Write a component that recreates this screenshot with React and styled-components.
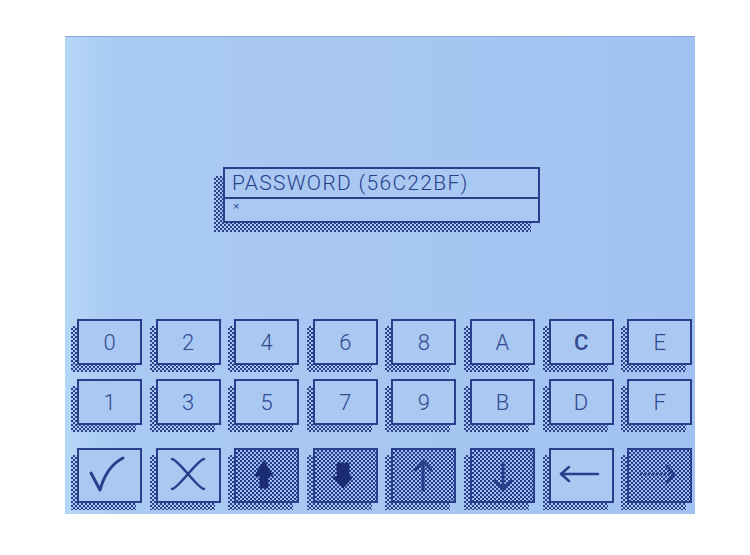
import React from 'react';
import styled, { createGlobalStyle, css } from 'styled-components';

const INK = '#2a3f8c';
const LABEL = '#34498f';
const LIGHT = '#a9c8f2';

const Global = createGlobalStyle`
  html, body { margin: 0; padding: 0; background: #ffffff; }
  body { font-family: "Liberation Sans", Arial, sans-serif; }
`;

const checker = (dark, light) => css`
  background-color: ${light};
  background-image: repeating-conic-gradient(${dark} 0 25%, transparent 0 50%);
  background-size: 4px 4px;
`;

const Page = styled.div`
  width: 750px;
  height: 555px;
  box-sizing: border-box;
  padding: 36px 0 0 65px;
`;

const Screen = styled.div`
  position: relative;
  z-index: 0;
  width: 630px;
  height: 478px;
  box-sizing: border-box;
  border-top: 1px solid #8ea8dc;
  background: linear-gradient(90deg, #b4d6f6 0%, #a9caf3 8%, #a6c6f2 60%, #a1c1f2 100%);
  padding: 130px 0 0 12px;
  display: flex;
  flex-direction: column;
`;

const PasswordBox = styled.div`
  position: relative;
  margin-left: 146px;
  width: 317px;
  height: 56px;
  box-sizing: border-box;
  border: 2px solid ${INK};
  background: ${LIGHT};
  display: flex;
  flex-direction: column;
  &::before {
    content: '';
    position: absolute;
    inset: -2px;
    transform: translate(-9px, 9px);
    z-index: -1;
    ${checker('#2b3f8c', '#a9c8f2')}
  }
`;

const BoxTitle = styled.div`
  height: 28px;
  border-bottom: 2px solid ${INK};
  padding-left: 7px;
  font-family: Roboto, "Liberation Sans", sans-serif;
  font-weight: 300;
  font-size: 21px;
  line-height: 29px;
  color: ${INK};
  letter-spacing: 1.3px;
`;

const BoxInput = styled.div`
  flex: 1;
  padding: 2px 8px;
  font-size: 11px;
  line-height: 10px;
  color: ${INK};
`;

const Keypad = styled.div`
  margin-top: 96px;
  display: flex;
  flex-direction: column;
`;

const KeyRow = styled.div`
  display: flex;
  gap: 13.6px;
  height: ${(p) => p.$h}px;
  margin-top: ${(p) => p.$mt || 0}px;
`;

const Key = styled.div`
  position: relative;
  width: 65px;
  height: 100%;
  box-sizing: border-box;
  border: 2px solid ${INK};
  display: flex;
  align-items: center;
  justify-content: center;
  font-family: Roboto, "Liberation Sans", sans-serif;
  font-size: 22px;
  color: ${LABEL};
  font-weight: ${(p) => (p.$strong ? 500 : 300)};
  ${(p) => (p.$dither ? checker('#24398a', '#9fbdee') : css`background: ${LIGHT};`)}
  &::before {
    content: '';
    position: absolute;
    inset: -2px;
    transform: translate(-6px, 7px);
    z-index: -1;
    ${checker('#2b3f8c', '#a9c8f2')}
  }
  svg {
    width: 100%;
    height: 100%;
    display: block;
  }
`;

const Icon = ({ children }) => (
  <svg viewBox="0 0 61 51" fill="none" stroke={INK} strokeLinecap="round" strokeLinejoin="round">
    {children}
  </svg>
);

const row1 = ['0', '2', '4', '6', '8', 'A', 'C', 'E'];
const row2 = ['1', '3', '5', '7', '9', 'B', 'D', 'F'];

export default function App() {
  return (
    <>
      <Global />
      <Page>
        <Screen>
          <PasswordBox>
            <BoxTitle>PASSWORD (56C22BF)</BoxTitle>
            <BoxInput>×</BoxInput>
          </PasswordBox>
          <Keypad>
            <KeyRow $h={46}>
              {row1.map((k) => (
                <Key key={k} $strong={k === 'C'}>{k}</Key>
              ))}
            </KeyRow>
            <KeyRow $h={46} $mt={14}>
              {row2.map((k) => (
                <Key key={k}>{k}</Key>
              ))}
            </KeyRow>
            <KeyRow $h={55} $mt={23}>
              <Key>
                <Icon>
                  <path d="M12 23 L21 40 C26 22 34 13 44 8" strokeWidth="3" />
                </Icon>
              </Key>
              <Key>
                <Icon>
                  <path d="M14 9 C20 9 40 39 46 39" strokeWidth="2.5" />
                  <path d="M46 9 C40 9 20 39 14 39" strokeWidth="2.5" />
                </Icon>
              </Key>
              <Key $dither>
                <Icon>
                  <path
                    d="M28 11 L37 26 L32 26 L32 38 L24 38 L24 26 L19 26 Z"
                    fill="#1b2c74"
                    stroke="#1b2c74"
                    strokeWidth="1"
                  />
                </Icon>
              </Key>
              <Key $dither>
                <Icon>
                  <path
                    d="M22 14 Q24 11 26 14 Q28 11 30 14 Q32 11 34 14 L34 27 L38 27 L28 38 L18 27 L22 27 Z"
                    fill="#1b2c74"
                    stroke="#1b2c74"
                    strokeWidth="1"
                  />
                </Icon>
              </Key>
              <Key $dither>
                <Icon>
                  <path d="M30 40 V12" strokeWidth="3" />
                  <path d="M22 20 L30 11 L38 20" strokeWidth="3" />
                </Icon>
              </Key>
              <Key $dither>
                <Icon>
                  <path d="M31 13 V39" strokeWidth="3" />
                  <path d="M23 31 L31 40 L39 31" strokeWidth="3" />
                </Icon>
              </Key>
              <Key>
                <Icon>
                  <path d="M10 24 H47" strokeWidth="2.5" />
                  <path d="M18 17 L10 24 L18 31" strokeWidth="2.5" />
                </Icon>
              </Key>
              <Key $dither>
                <Icon>
                  <path d="M11 24 H41" strokeWidth="2.5" strokeDasharray="2 2" strokeLinecap="butt" />
                  <path d="M38 16 L45 24 L38 32" strokeWidth="3" />
                </Icon>
              </Key>
            </KeyRow>
          </Keypad>
        </Screen>
      </Page>
    </>
  );
}
